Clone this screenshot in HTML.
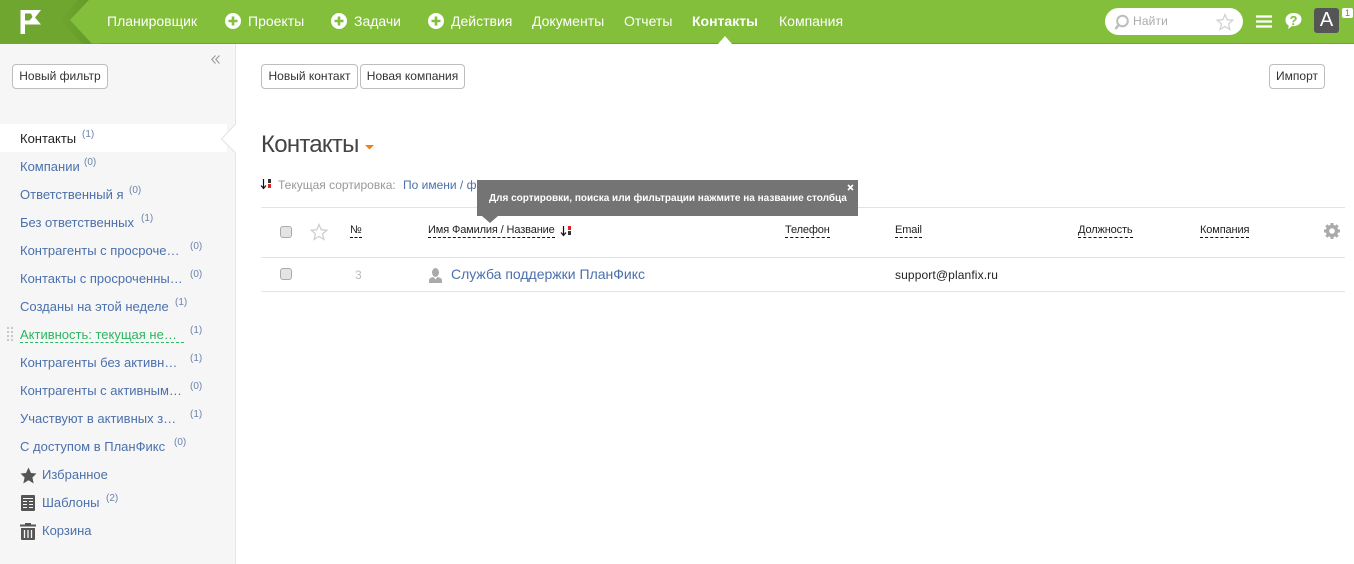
<!DOCTYPE html>
<html lang="ru"><head><meta charset="utf-8"><title>Контакты</title>
<style>
html,body{margin:0;padding:0;width:1354px;height:564px;overflow:hidden;background:#fff;font-family:"Liberation Sans",Arial,sans-serif}
.a{position:absolute;white-space:nowrap}
.nav{top:13px;font-size:14px;line-height:17px;color:#fff}
.btn{height:23px;line-height:23px;border:1px solid #bdbdbd;border-radius:4px;background:#fff;font-size:12px;color:#333;text-align:center;box-sizing:content-box}
.s{left:20px;font-size:13px;line-height:16px;color:#4c70ac}
.c{font-size:10px;line-height:12px;color:#6b84ad}
.th{top:224px;font-size:11px;line-height:13px;letter-spacing:-.13px;color:#222;border-bottom:1px dashed #111}
.hr{left:261px;width:1084px;height:1px;background:#e3e3e3}
.cb{width:10px;height:10px;border:1px solid #aaa;border-radius:3px;background:#e4e4e4}
</style></head><body>
<div class="a" style="left:0;top:0;width:1354px;height:44px;background:#83bf3b"></div>
<div class="a" style="left:0;top:43px;width:1354px;height:1px;background:#6ea52f"></div>
<svg class="a" style="left:0;top:0" width="100" height="44"><defs><linearGradient id="g" x1="0" x2="1" y1="0" y2="0"><stop offset="0" stop-color="#6fa62f"/><stop offset="1" stop-color="#649a28"/></linearGradient></defs><polygon points="0,0 89,0 70,20 92,44 0,44" fill="#6fa62f"/><polygon points="89,0 78,0 60,20 82,44 92,44 70,20" fill="url(#g)"/><polygon points="89,0 70,20 92,43.500 100,43.500 100,0" fill="#83bf3b"/><path d="M20.500 10H41l-6 7.500 6 7H25V34h-4.500z M25 13.500V20.500h4.500l3-3.500-1.500-3.500z" fill="#fff" fill-rule="evenodd"/></svg>
<div class="a nav" style="left:107px">Планировщик</div>
<svg class="a" style="left:225px;top:13px" width="16" height="16"><circle cx="8" cy="8" r="8" fill="#fff"/><path d="M8 3.500v9M3.500 8h9" stroke="#83bf3b" stroke-width="2.600"/></svg>
<div class="a nav" style="left:248px">Проекты</div>
<svg class="a" style="left:331px;top:13px" width="16" height="16"><circle cx="8" cy="8" r="8" fill="#fff"/><path d="M8 3.500v9M3.500 8h9" stroke="#83bf3b" stroke-width="2.600"/></svg>
<div class="a nav" style="left:354px">Задачи</div>
<svg class="a" style="left:428px;top:13px" width="16" height="16"><circle cx="8" cy="8" r="8" fill="#fff"/><path d="M8 3.500v9M3.500 8h9" stroke="#83bf3b" stroke-width="2.600"/></svg>
<div class="a nav" style="left:451px">Действия</div>
<div class="a nav" style="left:532px">Документы</div>
<div class="a nav" style="left:624px">Отчеты</div>
<div class="a nav" style="left:692px;font-weight:bold">Контакты</div>
<div class="a nav" style="left:779px">Компания</div>
<svg class="a" style="left:717px;top:36px" width="16" height="8"><polygon points="8,0 15,8 1,8" fill="#fff"/></svg>

<div class="a" style="left:1105px;top:8px;width:138px;height:27px;border-radius:14px;background:#fff"></div>
<svg class="a" style="left:1113px;top:13px" width="17" height="18"><circle cx="9.500" cy="8" r="5.300" fill="none" stroke="#bdbdbd" stroke-width="2"/><path d="M5.500 12L2.500 16" stroke="#bdbdbd" stroke-width="2.500"/></svg>
<div class="a" style="left:1133px;top:14px;font-size:12px;line-height:15px;letter-spacing:.15px;color:#aaa">Найти</div>
<svg class="a" style="left:1216px;top:13px" width="18" height="18"><polygon points="9,1.500 11.200,6.700 16.800,7.200 12.600,10.900 13.900,16.400 9,13.500 4.100,16.400 5.400,10.900 1.200,7.200 6.800,6.700" fill="none" stroke="#d2d2d2" stroke-width="1.300"/></svg>
<svg class="a" style="left:1256px;top:15px" width="16" height="13"><path d="M0 1.500h16M0 6.500h16M0 11.500h16" stroke="#fff" stroke-width="2.200"/></svg>
<svg class="a" style="left:1285px;top:12px" width="17" height="18"><path d="M8.500 1C4 1 .5 4 .5 8c0 2.500 1.300 4.500 3.300 5.600L3 17l4-3c.5.100 1 .100 1.500.100 4.500 0 8-3 8-6.900S13 1 8.500 1z" fill="#fff"/><text x="8.500" y="12.800" font-family="Liberation Sans" font-size="13" font-weight="bold" fill="#83bf3b" text-anchor="middle">?</text></svg>
<div class="a" style="left:1314px;top:8px;width:25px;height:25px;border-radius:3px;background:#555;color:#fff;font-size:20px;line-height:25px;text-align:center">A</div>
<div class="a" style="left:1342px;top:8px;width:11px;height:10px;border-radius:2px;background:#fff;color:#777;font-size:9px;line-height:10px;text-align:center">1</div>

<div class="a" style="left:0;top:44px;width:235px;height:520px;background:#f6f6f6;border-right:1px solid #e6e6e6"></div>
<svg class="a" style="left:211px;top:55px" width="9" height="9"><path d="M4.500 .5L.8 4.500l3.700 4M8.500 .5L4.800 4.500l3.700 4" fill="none" stroke="#999" stroke-width="1.100"/></svg>
<div class="a btn" style="left:12px;top:64px;width:94px">Новый фильтр</div>
<div class="a" style="left:0;top:124px;width:227px;height:28px;background:#fff"></div>
<svg class="a" style="left:220px;top:124px" width="17" height="30"><polygon points="16,0 2,15 16,29 17,29 17,0" fill="#fff"/><path d="M15.500 0L1.500 15l14 14" fill="none" stroke="#e3e3e3"/></svg>

<div class="a s" style="top:131px;color:#222">Контакты</div><div class="a c" style="left:82px;top:129px">(1)</div>
<div class="a s" style="top:159px">Компании</div><div class="a c" style="left:84px;top:157px">(0)</div>
<div class="a s" style="top:187px">Ответственный я</div><div class="a c" style="left:129px;top:185px">(0)</div>
<div class="a s" style="top:215px">Без ответственных</div><div class="a c" style="left:141px;top:213px">(1)</div>
<div class="a s" style="top:243px">Контрагенты с просроче…</div><div class="a c" style="left:190px;top:241px">(0)</div>
<div class="a s" style="top:271px">Контакты с просроченны…</div><div class="a c" style="left:190px;top:269px">(0)</div>
<div class="a s" style="top:299px">Созданы на этой неделе</div><div class="a c" style="left:175px;top:297px">(1)</div>
<svg class="a" style="left:7px;top:327px" width="7" height="16"><g fill="#c8c8c8"><rect x="0" y="0" width="2" height="2"/><rect x="4" y="0" width="2" height="2"/><rect x="0" y="4" width="2" height="2"/><rect x="4" y="4" width="2" height="2"/><rect x="0" y="8" width="2" height="2"/><rect x="4" y="8" width="2" height="2"/><rect x="0" y="12" width="2" height="2"/><rect x="4" y="12" width="2" height="2"/></g></svg>
<div class="a s" style="top:327px;color:#2cb562;width:164px;border-bottom:1px dashed #2cb562;height:15px">Активность: текущая не…</div><div class="a c" style="left:190px;top:325px">(1)</div>
<div class="a s" style="top:355px">Контрагенты без активн…</div><div class="a c" style="left:190px;top:353px">(1)</div>
<div class="a s" style="top:383px">Контрагенты с активным…</div><div class="a c" style="left:190px;top:381px">(0)</div>
<div class="a s" style="top:411px">Участвуют в активных з…</div><div class="a c" style="left:190px;top:409px">(1)</div>
<div class="a s" style="top:439px">С доступом в ПланФикс</div><div class="a c" style="left:174px;top:437px">(0)</div>
<svg class="a" style="left:20px;top:467px" width="17" height="17"><polygon points="8.500,0.500 11,6 16.500,6.500 12.400,10.500 13.700,16.500 8.500,13.300 3.300,16.500 4.600,10.500 0.500,6.500 6,6" fill="#555"/></svg>
<div class="a s" style="left:42px;top:467px">Избранное</div>
<svg class="a" style="left:21px;top:495px" width="14" height="16"><rect width="14" height="16" rx="1" fill="#555"/><path d="M2 3.500h10M2 6.500h4M8 6.500h4M2 9.500h4M8 9.500h4M2 12.500h4M8 12.500h4" stroke="#f6f6f6" stroke-width="1"/></svg>
<div class="a s" style="left:42px;top:495px">Шаблоны</div><div class="a c" style="left:106px;top:493px">(2)</div>
<svg class="a" style="left:20px;top:523px" width="16" height="17"><path d="M0 2.500h16" stroke="#555" stroke-width="2"/><rect x="5" y="0" width="6" height="2" fill="#555"/><path d="M1 5h14v11a1 1 0 0 1-1 1H2a1 1 0 0 1-1-1z" fill="#555"/><path d="M4.500 7v8M8 7v8M11.500 7v8" stroke="#f6f6f6" stroke-width="1.300"/></svg>
<div class="a s" style="left:42px;top:523px">Корзина</div>

<div class="a btn" style="left:261px;top:64px;width:95px">Новый контакт</div>
<div class="a btn" style="left:360px;top:64px;width:103px">Новая компания</div>
<div class="a btn" style="left:1269px;top:64px;width:54px">Импорт</div>

<div class="a" style="left:261px;top:131px;font-size:24px;line-height:28px;letter-spacing:-.75px;color:#444">Контакты</div>
<svg class="a" style="left:365px;top:145px" width="10" height="5"><polygon points="0,0 9,0 4.500,4.500" fill="#ee7f12"/></svg>

<svg class="a" style="left:260px;top:178px" width="13" height="12"><path d="M3.500 1v9M1 7.500l2.500 3 2.500-3" fill="none" stroke="#111" stroke-width="1.200"/><rect x="8" y="1" width="3" height="4" fill="#333"/><rect x="8" y="6" width="3" height="4" fill="#d22"/></svg>
<div class="a" style="left:278px;top:178px;font-size:12px;line-height:14px;color:#999">Текущая сортировка:</div>
<div class="a" style="left:403px;top:178px;font-size:12px;line-height:14px;color:#4c70ac">По имени / фамилии</div>

<div class="a hr" style="top:207px"></div>
<div class="a hr" style="top:257px"></div>
<div class="a hr" style="top:291px"></div>

<div class="a" style="left:477px;top:180px;width:381px;height:36px;background:#747474"></div>
<svg class="a" style="left:482px;top:216px" width="16" height="7"><polygon points="0,0 16,0 8,7" fill="#747474"/></svg>
<div class="a" style="left:489px;top:192px;font-size:10px;line-height:13px;font-weight:bold;color:#fff">Для сортировки, поиска или фильтрации нажмите на название столбца</div>
<svg class="a" style="left:847px;top:184px" width="7" height="7"><path d="M1 1l5 5M6 1l-5 5" stroke="#fff" stroke-width="1.600"/></svg>

<div class="a cb" style="left:280px;top:226px"></div>
<svg class="a" style="left:310px;top:223px" width="18" height="18"><polygon points="9,1.500 11.200,6.700 16.800,7.200 12.600,10.900 13.900,16.400 9,13.500 4.100,16.400 5.400,10.900 1.200,7.200 6.800,6.700" fill="none" stroke="#cfcfcf" stroke-width="1.300"/></svg>
<div class="a th" style="left:350px">№</div>
<div class="a th" style="left:428px">Имя Фамилия / Название</div>
<svg class="a" style="left:560px;top:225px" width="13" height="12"><path d="M3.500 1v9M1 7.500l2.500 3 2.500-3" fill="none" stroke="#111" stroke-width="1.200"/><rect x="8" y="1" width="3" height="4" fill="#d22"/><rect x="8" y="6" width="3" height="4" fill="#333"/></svg>
<div class="a th" style="left:785px">Телефон</div>
<div class="a th" style="left:895px">Email</div>
<div class="a th" style="left:1078px">Должность</div>
<div class="a th" style="left:1200px">Компания</div>
<svg class="a" style="left:1323px;top:222px" width="18" height="18" viewBox="0 0 18 18"><circle cx="9" cy="9" r="4.500" fill="none" stroke="#aaa" stroke-width="3.400"/><path d="M9 1v3M9 14v3M1 9h3M14 9h3M3.300 3.300l2.200 2.200M12.500 12.500l2.200 2.200M14.700 3.300l-2.200 2.200M5.500 12.500l-2.200 2.200" stroke="#aaa" stroke-width="3"/></svg>

<div class="a cb" style="left:280px;top:268px"></div>
<div class="a" style="left:355px;top:268px;font-size:12px;line-height:14px;color:#bbb">3</div>
<svg class="a" style="left:428px;top:268px" width="15" height="16"><ellipse cx="7.500" cy="4.500" rx="3.500" ry="4.500" fill="#aaa"/><path d="M1 15v-2.500c0-2.500 2.500-3 4.500-3.500L7.500 11.500 9.500 9c2 .5 4.500 1 4.500 3.500V15z" fill="#aaa"/></svg>
<div class="a" style="left:451px;top:266px;font-size:14px;line-height:17px;color:#4c70ac">Служба поддержки ПланФикс</div>
<div class="a" style="left:895px;top:268px;font-size:12px;line-height:14px;letter-spacing:.12px;color:#222">support@planfix.ru</div>
</body></html>
